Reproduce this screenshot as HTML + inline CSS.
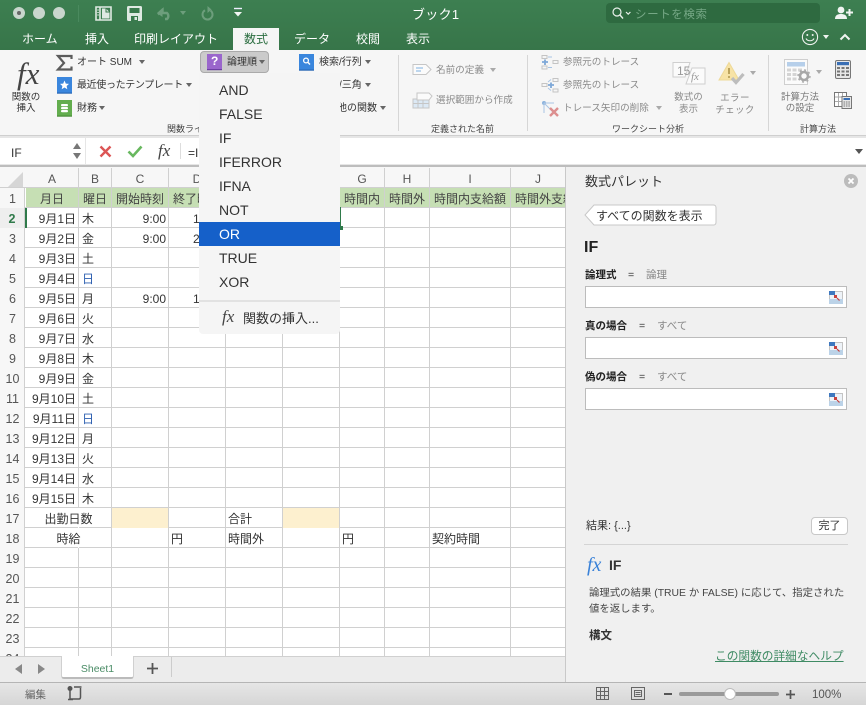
<!DOCTYPE html>
<html lang="ja"><head><meta charset="utf-8"><title>ブック1</title>
<style>
*{box-sizing:border-box}
html,body{margin:0;padding:0}
body{width:866px;height:705px;overflow:hidden;position:relative;background:#fff;font-family:"Liberation Sans","Noto Sans CJK JP",sans-serif;color:#333}
.a{position:absolute;white-space:nowrap}
.t{position:absolute;white-space:nowrap;line-height:16px;transform:translateY(-7px)}
.r{font-size:10px;color:#333}
.d{font-size:9.6px;color:#8a8a8a}
.g{font-size:9.5px;color:#444;text-align:center}
.gl{font-size:9px;color:#444}
.tab{font-size:12px;color:#fff;top:38px}
.car{position:absolute;width:0;height:0;border-left:3.5px solid transparent;border-right:3.5px solid transparent;border-top:4px solid #666}
.car.dm{border-top-color:#aaa}
.sep{position:absolute;width:1px;background:#d6d6d6;top:55px;height:76px}
svg{position:absolute;overflow:visible}
.v{position:absolute;top:168px;width:1px;height:488px;background:#d0d0d0}
.ch{position:absolute;top:168px;height:20px;line-height:22px;text-align:center;font-size:12px;color:#555}
.rh{position:absolute;left:0;width:25px;height:20px;line-height:22px;text-align:center;font-size:12.5px;color:#555}
.c{position:absolute;height:20px;line-height:22px;font-size:12px;color:#333;white-space:nowrap;overflow:hidden}
.dt{left:26px;width:50px;text-align:right}
.wd{left:82px;width:26px}
.hd{top:188px;text-align:center;font-size:12px;color:#444}
.m{position:absolute;left:199px;width:141px;height:24px;line-height:24px;padding-left:20px;font-size:14px;color:#333}
.lb{position:absolute;font-size:10.5px;font-weight:bold;color:#222;line-height:14px}
.eq{position:absolute;font-size:10.5px;color:#333;line-height:14px}
.ty{position:absolute;font-size:10.5px;color:#888;line-height:14px}
.in{position:absolute;left:585px;width:262px;height:22px;background:#fff;border:1px solid #bcbcbc}
</style></head><body>

<!-- title bar -->
<div class="a" style="left:0;top:0;width:866px;height:50px;background:linear-gradient(#3d7f51,#377549)"></div>
<div class="a" style="left:13px;top:7px;width:12px;height:12px;border-radius:50%;background:#c9d6cd"></div>
<div class="a" style="left:17px;top:11px;width:4px;height:4px;border-radius:50%;background:#666"></div>
<div class="a" style="left:33px;top:7px;width:12px;height:12px;border-radius:50%;background:#c9d6cd"></div>
<div class="a" style="left:53px;top:7px;width:12px;height:12px;border-radius:50%;background:#c9d6cd"></div>
<div class="a" style="left:78px;top:5px;width:1px;height:17px;background:#4a8a5e"></div>
<svg style="left:95px;top:6px" width="17" height="15"><path d="M1 1H16V14H1Z M5 1V14" fill="none" stroke="#dfe9e2" stroke-width="1.6"/><path d="M7 2.5H11L14.5 6V12.5H7Z" fill="#dfe9e2"/><path d="M11 2.5V6H14.5" fill="none" stroke="#3a7a4d"/><path d="M2.3 4H3.8M2.3 6.5H3.8M2.3 9H3.8" stroke="#dfe9e2"/></svg>
<svg style="left:127px;top:6px" width="15" height="15"><path d="M1.5 0H13.5A1.5 1.5 0 0 1 15 1.5V13.5A1.5 1.5 0 0 1 13.5 15H1.5A1.5 1.5 0 0 1 0 13.5V1.5A1.5 1.5 0 0 1 1.5 0Z" fill="#dfe9e2"/><path d="M2.5 2H12.5V7H2.5Z" fill="#3a7a4d"/><path d="M4 10H11V15H4Z" fill="#3a7a4d"/><path d="M7.5 11H10V14H7.5Z" fill="#dfe9e2"/></svg>
<svg style="left:157px;top:6px" width="16" height="14"><path d="M1 8.5L5.5 4V7H10A4 4 0 0 1 10 13H8" fill="none" stroke="#6d9e7c" stroke-width="2.4"/><path d="M0 7L5.5 2V11Z" fill="#6d9e7c"/></svg>
<div class="car" style="left:180px;top:11px;border-top-color:#6d9e7c"></div>
<svg style="left:200px;top:6px" width="14" height="15"><path d="M5 4.2A5 5 0 1 0 10.5 4.5" fill="none" stroke="#6d9e7c" stroke-width="2"/><path d="M8.5 0V7L12.5 3.5Z" fill="#6d9e7c" transform="translate(-1 0)"/></svg>
<svg style="left:233px;top:8px" width="10" height="9"><path d="M1 .5H9" stroke="#eef" stroke-width="1.4"/><path d="M1 4H9L5 8.5Z" fill="#f2f6f3"/></svg>
<div class="t" style="left:412px;top:14px;font-size:13px;color:#fff;letter-spacing:.3px">ブック1</div>
<div class="a" style="left:606px;top:3px;width:214px;height:20px;border-radius:4px;background:#2e6a40"></div>
<svg style="left:612px;top:7px" width="20" height="12"><circle cx="5" cy="5" r="4" fill="none" stroke="#e8f0ea" stroke-width="1.2"/><path d="M8 8L11 11.5" stroke="#e8f0ea" stroke-width="1.4"/><path d="M14 5L16.2 7.2L18.4 5" fill="none" stroke="#e8f0ea" stroke-width="1.2"/></svg>
<div class="t" style="left:635px;top:14px;font-size:11.5px;color:#76a886;letter-spacing:.6px">シートを検索</div>
<svg style="left:835px;top:6px" width="19" height="14"><circle cx="6" cy="4" r="3.4" fill="#f0f4f1"/><path d="M0 13C0 9 3 8 6 8S12 9 12 13Z" fill="#f0f4f1"/><path d="M14.5 3V10M11 6.5H18" stroke="#f0f4f1" stroke-width="2"/></svg>

<div class="a" style="left:233px;top:28px;width:46px;height:22px;background:#f5f5f5"></div>
<div class="t tab" style="left:22px">ホーム</div>
<div class="t tab" style="left:85px">挿入</div>
<div class="t tab" style="left:134px">印刷レイアウト</div>
<div class="t tab" style="left:244px;color:#2c6e41">数式</div>
<div class="t tab" style="left:294px">データ</div>
<div class="t tab" style="left:356px">校閲</div>
<div class="t tab" style="left:406px">表示</div>
<svg style="left:801px;top:28px" width="18" height="18"><circle cx="9" cy="9" r="7.6" fill="none" stroke="#eef3ef" stroke-width="1.1"/><circle cx="6.3" cy="7" r="1" fill="#eef3ef"/><circle cx="11.7" cy="7" r="1" fill="#eef3ef"/><path d="M5 10.5C6.5 13.5 11.5 13.5 13 10.5" fill="none" stroke="#eef3ef" stroke-width="1.1"/></svg>
<div class="car" style="left:823px;top:35px;border-top-color:#eef3ef"></div>
<svg style="left:839px;top:33px" width="12" height="8"><path d="M1.5 6.5L6 2L10.5 6.5" fill="none" stroke="#f0f4f1" stroke-width="2"/></svg>

<!-- ribbon -->
<div class="a" style="left:0;top:50px;width:866px;height:86px;background:#f6f6f6;border-bottom:1px solid #cfcfcf"></div>
<div class="a" style="left:17px;top:56px;font:italic 31px 'Liberation Serif',serif;color:#444;line-height:36px">fx</div>
<div class="g a" style="left:6px;top:93px;width:40px;line-height:10.5px;color:#333">関数の<br>挿入</div>
<svg style="left:57px;top:55px" width="15" height="16"><path d="M14.5 4V1H1L7 8L1 14.5H14.5V11.5" fill="none" stroke="#5c5c5c" stroke-width="2.2"/></svg>
<div class="t r" style="left:77px;top:62px">オート SUM</div><div class="car" style="left:139px;top:60px"></div>
<svg style="left:57px;top:77px" width="15" height="17"><rect width="15" height="15.5" fill="#3a86dd"/><rect y="15.5" width="15" height="1.2" fill="#2867b5"/><path d="M7.5 3.5L8.8 6.6L12 6.9L9.6 9L10.3 12.2L7.5 10.5L4.7 12.2L5.4 9L3 6.9L6.2 6.6Z" fill="#fff"/></svg>
<div class="t r" style="left:77px;top:85px;letter-spacing:-.35px">最近使ったテンプレート</div><div class="car" style="left:186px;top:83px"></div>
<svg style="left:57px;top:100px" width="15" height="17"><rect width="15" height="15.5" fill="#63ad4e"/><rect y="15.5" width="15" height="1.2" fill="#4a8d38"/><rect x="4" y="4" width="7" height="2.2" rx="1" fill="#fff"/><rect x="4" y="7" width="7" height="2.2" rx="1" fill="#fff"/><rect x="4" y="10" width="7" height="2.2" rx="1" fill="#fff"/></svg>
<div class="t r" style="left:77px;top:108px">財務</div><div class="car" style="left:99px;top:106px"></div>
<div class="t gl" style="left:167px;top:128px">関数ライブラリ</div>

<div class="a" style="left:200px;top:51px;width:69px;height:22px;background:#cbcbcb;border:1px solid #aaa;border-radius:4px"></div>
<svg style="left:207px;top:54px" width="15" height="17"><rect width="15" height="15" fill="#9a66cc"/><rect y="15" width="15" height="1.2" fill="#6d3fa3"/></svg>
<div class="t" style="left:211px;top:61px;font-size:12px;font-weight:bold;color:#fff;line-height:14px">?</div>
<div class="t r" style="left:227px;top:62px">論理順</div><div class="car" style="left:259px;top:60px"></div>

<svg style="left:299px;top:54px" width="15" height="17"><rect width="15" height="15.5" fill="#3a86dd"/><rect y="15.5" width="15" height="1.2" fill="#2867b5"/><circle cx="7" cy="6.5" r="2.4" fill="none" stroke="#fff" stroke-width="1.3"/><path d="M8.8 8.3L11 10.5" stroke="#fff" stroke-width="1.4"/></svg>
<div class="t r" style="left:319px;top:62px">検索/行列</div><div class="car" style="left:365px;top:60px"></div>
<div class="t r" style="left:319px;top:85px">数学/三角</div><div class="car" style="left:365px;top:83px"></div>
<div class="t r" style="left:317px;top:108px">その他の関数</div><div class="car" style="left:380px;top:106px"></div>
<div class="sep" style="left:398px"></div>

<svg style="left:412px;top:63px" width="20" height="13"><path d="M1 1.5H14L19 6.5L14 11.5H1Z" fill="#fbfbfb" stroke="#c6c6c6"/><path d="M4 5H11M4 8H9" stroke="#7fb0e0"/></svg>
<div class="t d" style="left:436px;top:70px">名前の定義</div><div class="car dm" style="left:490px;top:68px"></div>
<svg style="left:413px;top:92px" width="20" height="17"><path d="M0 7H16V16H0Z" fill="#dce9f5" stroke="#c6c6c6"/><path d="M5 7V16M10 7V16M0 11.5H16" stroke="#c6c6c6"/><path d="M4 1H16L19 4L16 8H4Z" fill="#fbfbfb" stroke="#c6c6c6"/></svg>
<div class="t d" style="left:436px;top:100px">選択範囲から作成</div>
<div class="t gl" style="left:431px;top:128px">定義された名前</div>
<div class="sep" style="left:527px"></div>

<svg style="left:541px;top:55px" width="18" height="15"><g fill="none" stroke="#c4c4c4"><rect x="1" y=".5" width="5" height="3"/><rect x="1" y="11" width="5" height="3"/><rect x="12" y="5.5" width="5" height="3"/></g><path d="M4 4.5V10M1 7H7" stroke="#7fa8d8" stroke-width="1.8"/><path d="M7 2H11M7 12.5H11" stroke="#a8c4e4"/></svg>
<div class="t d" style="left:563px;top:62px">参照元のトレース</div>
<svg style="left:541px;top:78px" width="18" height="15"><g fill="none" stroke="#c4c4c4"><rect x="12" y=".5" width="5" height="3"/><rect x="12" y="11" width="5" height="3"/><rect x="1" y="5.5" width="5" height="3"/></g><path d="M10 4.5V10M7 7H13" stroke="#7fa8d8" stroke-width="1.8"/><path d="M7 4L10 1.5M7 10L10 12.5" stroke="#a8c4e4"/></svg>
<div class="t d" style="left:563px;top:85px">参照先のトレース</div>
<svg style="left:541px;top:100px" width="18" height="17"><circle cx="3" cy="3" r="2" fill="#8db3dd"/><path d="M3 3H13M3 3V13M3 3L12 12" stroke="#a8c4e4"/><path d="M9 8L17 16M17 8L9 16" stroke="#dc8f8f" stroke-width="2.4"/></svg>
<div class="t d" style="left:563px;top:108px">トレース矢印の削除</div><div class="car dm" style="left:656px;top:106px"></div>
<svg style="left:673px;top:62px" width="33" height="23"><path d="M0 .5H17L12 15H0Z" fill="#fbfbfb" stroke="#cfcfcf"/><path d="M19 6H32V22H13Z" fill="#fbfbfb" stroke="#cfcfcf"/></svg>
<div class="t" style="left:677px;top:70px;font-size:12px;color:#999">15</div>
<div class="t" style="left:691px;top:77px;font:italic 11px/14px 'Liberation Serif',serif;color:#999">fx</div>
<div class="g a" style="left:668px;top:92px;width:41px;line-height:12px;color:#8a8a8a">数式の<br>表示</div>
<svg style="left:718px;top:62px" width="28" height="25"><path d="M11 .5L21 18H1Z" fill="#f7e3a6" stroke="#eed998"/><path d="M11 6V12" stroke="#bba35c" stroke-width="2"/><circle cx="11" cy="15" r="1.1" fill="#bba35c"/><path d="M14 16L18 20.5L25.5 12" fill="none" stroke="#bdbdbd" stroke-width="3.2"/></svg>
<div class="car dm" style="left:750px;top:71px"></div>
<div class="g a" style="left:712px;top:93px;width:46px;line-height:12px;color:#8a8a8a;letter-spacing:.4px">エラー<br>チェック</div>
<div class="t gl" style="left:612px;top:128px">ワークシート分析</div>
<div class="sep" style="left:768px"></div>

<svg style="left:784px;top:59px" width="32" height="27"><rect x=".5" y=".5" width="23" height="25" fill="#fbfbfb" stroke="#cfcfcf"/><rect x="3" y="3" width="18" height="4.5" fill="#b6cfea"/><g fill="#d4d4d4"><rect x="3" y="9.5" width="4" height="3"/><rect x="8.5" y="9.5" width="4" height="3"/><rect x="14" y="9.5" width="4" height="3"/><rect x="3" y="14" width="4" height="3"/><rect x="8.5" y="14" width="4" height="3"/><rect x="3" y="18.5" width="4" height="3"/><rect x="8.5" y="18.5" width="4" height="3"/></g><circle cx="20" cy="17" r="4" fill="none" stroke="#a8a8a8" stroke-width="2.6"/><circle cx="20" cy="17" r="6" fill="none" stroke="#a8a8a8" stroke-width="1.4" stroke-dasharray="2 2.7"/></svg>
<div class="car dm" style="left:816px;top:70px"></div>
<div class="g a" style="left:775px;top:93px;width:50px;line-height:10.5px;color:#777">計算方法<br>の設定</div>
<svg style="left:835px;top:60px" width="16" height="19"><rect x=".5" y=".5" width="15" height="18" rx="1.5" fill="#e8e8e8" stroke="#777"/><rect x="2" y="2" width="12" height="3.2" fill="#3a6fb5"/><g fill="#777"><rect x="2" y="7" width="3" height="2"/><rect x="6.5" y="7" width="3" height="2"/><rect x="11" y="7" width="3" height="2"/><rect x="2" y="10.5" width="3" height="2"/><rect x="6.5" y="10.5" width="3" height="2"/><rect x="11" y="10.5" width="3" height="2"/><rect x="2" y="14" width="3" height="2"/><rect x="6.5" y="14" width="3" height="2"/><rect x="11" y="14" width="3" height="2"/></g></svg>
<svg style="left:834px;top:92px" width="18" height="17"><rect x=".5" y=".5" width="12" height="14" fill="#fff" stroke="#777"/><path d="M4.5 1V14M8.5 1V14M1 5H12M1 9.5H12" stroke="#aaa"/><rect x="8" y="4.5" width="9.5" height="12" fill="#e8e8e8" stroke="#777"/><rect x="9.5" y="6" width="6.5" height="2" fill="#3a6fb5"/><path d="M9.5 10H16M9.5 12H16M9.5 14H16" stroke="#777" stroke-dasharray="1.6 .8"/></svg>
<div class="t gl" style="left:800px;top:128px">計算方法</div>

<!-- formula bar -->
<div class="a" style="left:0;top:136px;width:866px;height:31px;background:#e6e6e6"></div>
<div class="a" style="left:0;top:138px;width:85px;height:26px;background:#fff"></div>
<div class="a" style="left:86px;top:138px;width:780px;height:26px;background:#fff"></div>
<div class="t" style="left:11px;top:152px;font-size:12px;color:#333">IF</div>
<svg style="left:72px;top:142px" width="10" height="18"><path d="M5 1L9 7H1Z" fill="#777"/><path d="M5 17L9 11H1Z" fill="#777"/></svg>
<svg style="left:99px;top:145px" width="13" height="13"><path d="M1.5 1.5L11.5 11.5M11.5 1.5L1.5 11.5" stroke="#dc5555" stroke-width="2.4"/></svg>
<svg style="left:127px;top:145px" width="16" height="13"><path d="M1.5 6.5L6 11L14.5 1.5" fill="none" stroke="#68b85f" stroke-width="2.6"/></svg>
<div class="a" style="left:158px;top:141px;font:italic 17px/20px 'Liberation Serif',serif;color:#444">fx</div>
<div class="a" style="left:180px;top:143px;width:1px;height:16px;background:#ddd"></div>
<div class="t" style="left:188px;top:152px;font-size:12px;color:#333">=I</div>
<div class="a" style="left:855px;top:149px;border-left:4px solid transparent;border-right:4px solid transparent;border-top:5px solid #555"></div>
<div class="a" style="left:0;top:165px;width:866px;height:2px;background:#bdbdbd"></div>

<!-- grid -->
<div class="a" style="left:0;top:167px;width:566px;height:489px;background:repeating-linear-gradient(to bottom,#fff 0,#fff 19px,#d0d0d0 19px,#d0d0d0 20px) 0 21px no-repeat;background-size:566px 468px"></div>
<div class="a" style="left:0;top:167px;width:25px;height:489px;background:#f7f7f7;border-right:1px solid #d0d0d0"></div>
<div class="a" style="left:0;top:167px;width:566px;height:21px;background:#f7f7f7;border-bottom:1px solid #d0d0d0"></div>
<div class="a" style="left:8px;top:172px;width:0;height:0;border-bottom:15px solid #d6d6d6;border-left:15px solid transparent"></div>

<!-- row 1 green + fills -->
<div class="a" style="left:26px;top:188px;width:540px;height:20px;background:#c6dfb4"></div>
<div class="a" style="left:112px;top:508px;width:57px;height:20px;background:#fdf0cf"></div>
<div class="a" style="left:283px;top:508px;width:57px;height:20px;background:#fdf0cf"></div>

<div class="v" style="left:78px"></div><div class="v" style="left:111px"></div><div class="v" style="left:168px"></div><div class="v" style="left:225px"></div><div class="v" style="left:282px"></div><div class="v" style="left:339px"></div><div class="v" style="left:384px"></div><div class="v" style="left:429px"></div><div class="v" style="left:510px"></div>
<div class="a" style="left:78px;top:508px;width:1px;height:40px;background:#fff"></div>
<div class="a" style="left:26px;top:207px;width:540px;height:1px;background:#d0d0d0"></div>

<div class="ch" style="left:26px;width:52px">A</div><div class="ch" style="left:79px;width:32px">B</div><div class="ch" style="left:112px;width:56px">C</div><div class="ch" style="left:169px;width:56px">D</div><div class="ch" style="left:340px;width:44px">G</div><div class="ch" style="left:385px;width:44px">H</div><div class="ch" style="left:430px;width:80px">I</div><div class="ch" style="left:511px;width:54px">J</div>

<div class="rh" style="top:188px">1</div><div class="rh" style="top:208px;color:#2f7a4a;font-weight:bold;background:#eee;border-right:1px solid #d0d0d0">2</div><div class="rh" style="top:228px">3</div><div class="rh" style="top:248px">4</div><div class="rh" style="top:268px">5</div><div class="rh" style="top:288px">6</div><div class="rh" style="top:308px">7</div><div class="rh" style="top:328px">8</div><div class="rh" style="top:348px">9</div><div class="rh" style="top:368px">10</div><div class="rh" style="top:388px">11</div><div class="rh" style="top:408px">12</div><div class="rh" style="top:428px">13</div><div class="rh" style="top:448px">14</div><div class="rh" style="top:468px">15</div><div class="rh" style="top:488px">16</div><div class="rh" style="top:508px">17</div><div class="rh" style="top:528px">18</div><div class="rh" style="top:548px">19</div><div class="rh" style="top:568px">20</div><div class="rh" style="top:588px">21</div><div class="rh" style="top:608px">22</div><div class="rh" style="top:628px">23</div>
<div class="rh" style="top:648px;height:8px;overflow:hidden">24</div>
<div class="a" style="left:25px;top:208px;width:2px;height:20px;background:#2f7a4a"></div>

<div class="c hd" style="left:26px;width:52px">月日</div><div class="c hd" style="left:79px;width:32px">曜日</div><div class="c hd" style="left:112px;width:56px">開始時刻</div><div class="c hd" style="left:169px;width:56px">終了時刻</div><div class="c hd" style="left:340px;width:44px">時間内</div><div class="c hd" style="left:385px;width:44px">時間外</div><div class="c hd" style="left:430px;width:80px">時間内支給額</div><div class="c hd" style="left:511px;width:54px;text-align:left;padding-left:4px">時間外支給額</div>

<div class="c dt" style="top:208px">9月1日</div><div class="c wd" style="top:208px">木</div>
<div class="c dt" style="top:228px">9月2日</div><div class="c wd" style="top:228px">金</div>
<div class="c dt" style="top:248px">9月3日</div><div class="c wd" style="top:248px">土</div>
<div class="c dt" style="top:268px">9月4日</div><div class="c wd" style="top:268px;color:#2d5fb0">日</div>
<div class="c dt" style="top:288px">9月5日</div><div class="c wd" style="top:288px">月</div>
<div class="c dt" style="top:308px">9月6日</div><div class="c wd" style="top:308px">火</div>
<div class="c dt" style="top:328px">9月7日</div><div class="c wd" style="top:328px">水</div>
<div class="c dt" style="top:348px">9月8日</div><div class="c wd" style="top:348px">木</div>
<div class="c dt" style="top:368px">9月9日</div><div class="c wd" style="top:368px">金</div>
<div class="c dt" style="top:388px">9月10日</div><div class="c wd" style="top:388px">土</div>
<div class="c dt" style="top:408px">9月11日</div><div class="c wd" style="top:408px;color:#2d5fb0">日</div>
<div class="c dt" style="top:428px">9月12日</div><div class="c wd" style="top:428px">月</div>
<div class="c dt" style="top:448px">9月13日</div><div class="c wd" style="top:448px">火</div>
<div class="c dt" style="top:468px">9月14日</div><div class="c wd" style="top:468px">水</div>
<div class="c dt" style="top:488px">9月15日</div><div class="c wd" style="top:488px">木</div>

<div class="c" style="left:112px;width:54px;top:208px;text-align:right">9:00</div><div class="c" style="left:169px;width:54px;top:208px;text-align:right">18:00</div>
<div class="c" style="left:112px;width:54px;top:228px;text-align:right">9:00</div><div class="c" style="left:169px;width:54px;top:228px;text-align:right">21:00</div>
<div class="c" style="left:112px;width:54px;top:288px;text-align:right">9:00</div><div class="c" style="left:169px;width:54px;top:288px;text-align:right">18:00</div>

<div class="c" style="left:26px;width:85px;top:508px;text-align:center">出勤日数</div>
<div class="c" style="left:26px;width:85px;top:528px;text-align:center">時給</div>
<div class="c" style="left:228px;top:508px">合計</div>
<div class="c" style="left:171px;top:528px">円</div>
<div class="c" style="left:228px;top:528px">時間外</div>
<div class="c" style="left:342px;top:528px">円</div>
<div class="c" style="left:432px;top:528px">契約時間</div>

<div class="a" style="left:339px;top:207px;width:2px;height:22px;background:#2f7a4a"></div>
<div class="a" style="left:339px;top:226px;width:4px;height:4px;background:#2f7a4a"></div>

<!-- dropdown menu -->
<div class="a" style="left:199px;top:73px;width:141px;height:261px;background:#f5f5f5;border-radius:0 0 4px 4px"></div>
<div class="m" style="top:78px">AND</div>
<div class="m" style="top:102px">FALSE</div>
<div class="m" style="top:126px">IF</div>
<div class="m" style="top:150px">IFERROR</div>
<div class="m" style="top:174px">IFNA</div>
<div class="m" style="top:198px">NOT</div>
<div class="m" style="top:222px;background:#1560c9;color:#fff">OR</div>
<div class="m" style="top:246px">TRUE</div>
<div class="m" style="top:270px">XOR</div>
<div class="a" style="left:199px;top:300px;width:141px;height:2px;background:#e2e2e2"></div>
<div class="a" style="left:222px;top:307px;font:italic 17px/20px 'Liberation Serif',serif;color:#444">fx</div>
<div class="t" style="left:243px;top:318px;font-size:13px;color:#333">関数の挿入...</div>

<!-- right pane -->
<div class="a" style="left:565px;top:167px;width:301px;height:516px;background:#f0f0f0;border-left:1px solid #c9c9c9"></div>
<div class="t" style="left:585px;top:181px;font-size:13px;color:#333">数式パレット</div>
<svg style="left:844px;top:174px" width="14" height="14"><circle cx="7" cy="7" r="7" fill="#bcbcbc"/><path d="M4.5 4.5L9.5 9.5M9.5 4.5L4.5 9.5" stroke="#fff" stroke-width="1.8"/></svg>
<svg style="left:584px;top:204px" width="133" height="22"><path d="M1 11L10 1H129A2.500 2.500 0 0 1 132 3.500V18.500A2.500 2.500 0 0 1 129 21H10Z" fill="#fff" stroke="#c8c8c8"/></svg>
<div class="t" style="left:596px;top:215px;font-size:12px;color:#333">すべての関数を表示</div>
<div class="t" style="left:584px;top:247px;font-size:16px;font-weight:bold;color:#222">IF</div>

<div class="lb" style="left:585px;top:268px">論理式</div><div class="eq" style="left:628px;top:268px">=</div><div class="ty" style="left:646px;top:268px">論理</div>
<div class="in" style="top:286px"></div>
<div class="lb" style="left:585px;top:319px">真の場合</div><div class="eq" style="left:639px;top:319px">=</div><div class="ty" style="left:657px;top:319px">すべて</div>
<div class="in" style="top:337px"></div>
<div class="lb" style="left:585px;top:370px">偽の場合</div><div class="eq" style="left:639px;top:370px">=</div><div class="ty" style="left:657px;top:370px">すべて</div>
<div class="in" style="top:388px"></div>
<svg style="left:829px;top:291px" width="14" height="13"><rect x=".5" y=".5" width="13" height="12" fill="#eef3f8" stroke="#c4c4c4"/><rect width="6" height="4" fill="#3f78bf"/><rect y="8" width="14" height="5" fill="#bcd3e8"/><path d="M5 4H8V7H5Z" fill="#c9433f"/><path d="M8 7L10.500 9.500" stroke="#c9433f" stroke-width="1.2"/></svg>
<svg style="left:829px;top:342px" width="14" height="13"><rect x=".5" y=".5" width="13" height="12" fill="#eef3f8" stroke="#c4c4c4"/><rect width="6" height="4" fill="#3f78bf"/><rect y="8" width="14" height="5" fill="#bcd3e8"/><path d="M5 4H8V7H5Z" fill="#c9433f"/><path d="M8 7L10.500 9.500" stroke="#c9433f" stroke-width="1.2"/></svg>
<svg style="left:829px;top:393px" width="14" height="13"><rect x=".5" y=".5" width="13" height="12" fill="#eef3f8" stroke="#c4c4c4"/><rect width="6" height="4" fill="#3f78bf"/><rect y="8" width="14" height="5" fill="#bcd3e8"/><path d="M5 4H8V7H5Z" fill="#c9433f"/><path d="M8 7L10.500 9.500" stroke="#c9433f" stroke-width="1.2"/></svg>

<div class="t" style="left:586px;top:525px;font-size:11px;color:#333">結果: {...}</div>
<div class="a" style="left:811px;top:517px;width:37px;height:18px;background:#fff;border:1px solid #c8c8c8;border-radius:4px;text-align:center;font-size:11px;line-height:16px;color:#333">完了</div>
<div class="a" style="left:584px;top:544px;width:264px;height:1px;background:#d4d4d4"></div>
<div class="a" style="left:587px;top:553px;font:italic 20px/24px 'Liberation Serif',serif;color:#3a82d8">fx</div>
<div class="t" style="left:609px;top:564px;font-size:14px;font-weight:bold;color:#333">IF</div>
<div class="t" style="left:589px;top:593px;font-size:10.4px;color:#444">論理式の結果 (TRUE か FALSE) に応じて、指定された</div>
<div class="t" style="left:589px;top:609px;font-size:10.4px;color:#444">値を返します。</div>
<div class="t" style="left:589px;top:635px;font-size:11.5px;font-weight:bold;color:#333">構文</div>
<div class="t" style="left:715px;top:656px;font-size:11.7px;color:#3f8b64;text-decoration:underline">この関数の詳細なヘルプ</div>

<!-- sheet tabs -->
<div class="a" style="left:0;top:656px;width:565px;height:27px;background:#ececec;border-top:1px solid #d0d0d0"></div>
<svg style="left:15px;top:664px" width="32" height="11"><path d="M7 0V10L0 5Z M23 0V10L30 5Z" fill="#888"/></svg>
<div class="a" style="left:61px;top:656px;width:73px;height:23px;background:#fff;border:1px solid #d0d0d0;border-top:none;border-bottom:2px solid #bbb;border-radius:0 0 3px 3px;text-align:center;font-size:10.5px;line-height:27px;color:#4a8c66">Sheet1</div>
<svg style="left:147px;top:663px" width="11" height="11"><path d="M5.500 0V11M0 5.500H11" stroke="#555" stroke-width="1.8"/></svg>
<div class="a" style="left:171px;top:657px;width:1px;height:20px;background:#ccc"></div>

<!-- status bar -->
<div class="a" style="left:0;top:682px;width:866px;height:23px;background:linear-gradient(#e6e6e6,#d6d6d6);border-top:1px solid #b5b5b5"></div>
<div class="t" style="left:25px;top:694px;font-size:10.5px;color:#666">編集</div>
<svg style="left:67px;top:686px" width="16" height="15"><circle cx="3" cy="2.500" r="2.500" fill="#555"/><path d="M3 3V13H12C13 13 13.500 12 13.500 11V2M7 1H14.500M1 13.500H6" fill="none" stroke="#555" stroke-width="1.500"/></svg>
<svg style="left:596px;top:687px" width="14" height="14"><path d="M.5 .5H12.500V12.500H.5Z M4.500 .5V12.500M8.500 .5V12.500M.5 4.500H12.500M.5 8.500H12.500" fill="none" stroke="#666"/></svg>
<svg style="left:631px;top:687px" width="15" height="14"><path d="M.5 .5H13.500V12.500H.5Z" fill="none" stroke="#666"/><path d="M3.500 3.500H10.500V9.500H3.500Z M4.500 5.500H9.500M4.500 7.500H9.500" fill="none" stroke="#666"/></svg>
<div class="a" style="left:664px;top:693px;width:8px;height:2px;background:#555"></div>
<div class="a" style="left:679px;top:692px;width:100px;height:4px;border-radius:2px;background:#9a9a9a"></div>
<div class="a" style="left:724px;top:688px;width:12px;height:12px;border-radius:50%;background:#fff;border:1px solid #bbb"></div>
<svg style="left:786px;top:690px" width="9" height="9"><path d="M4.500 0V9M0 4.500H9" stroke="#555" stroke-width="1.700"/></svg>
<div class="t" style="left:812px;top:694px;font-size:11.5px;color:#555">100%</div>
</body></html>
